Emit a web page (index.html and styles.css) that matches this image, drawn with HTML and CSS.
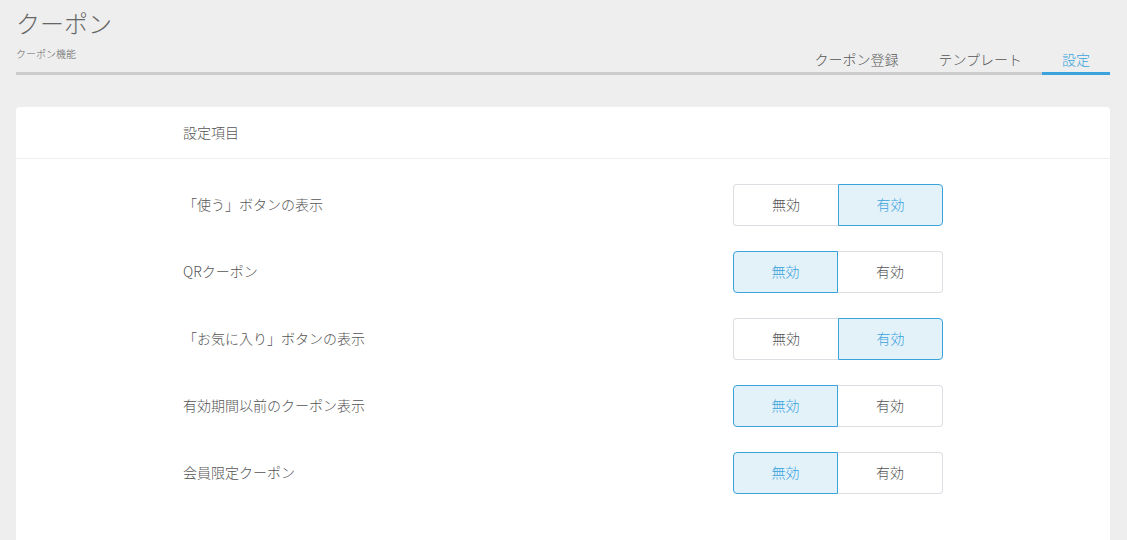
FILE: index.html
```html
<!DOCTYPE html>
<html lang="ja">
<head>
  <meta charset="UTF-8">
  <meta name="viewport" content="width=device-width, initial-scale=1.0">
  <title>クーポン</title>
  <link rel="stylesheet" href="styles.css">
</head>
<body>
  <div class="page">
    <div class="page-head">
      <div class="page-title">
        <h1>クーポン</h1>
        <p>クーポン機能</p>
      </div>
      <ul class="tabs">
        <li>クーポン登録</li>
        <li>テンプレート</li>
        <li class="active">設定</li>
      </ul>
    </div>

    <div class="card">
      <div class="card-head">設定項目</div>
      <div class="card-body">
        <div class="setting-row">
          <div class="setting-label">「使う」ボタンの表示</div>
          <div class="toggle">
            <span>無効</span>
            <span class="on">有効</span>
          </div>
        </div>
        <div class="setting-row">
          <div class="setting-label">QRクーポン</div>
          <div class="toggle">
            <span class="on">無効</span>
            <span>有効</span>
          </div>
        </div>
        <div class="setting-row">
          <div class="setting-label">「お気に入り」ボタンの表示</div>
          <div class="toggle">
            <span>無効</span>
            <span class="on">有効</span>
          </div>
        </div>
        <div class="setting-row">
          <div class="setting-label">有効期間以前のクーポン表示</div>
          <div class="toggle">
            <span class="on">無効</span>
            <span>有効</span>
          </div>
        </div>
        <div class="setting-row">
          <div class="setting-label">会員限定クーポン</div>
          <div class="toggle">
            <span class="on">無効</span>
            <span>有効</span>
          </div>
        </div>
      </div>
    </div>
  </div>
</body>
</html>
```

FILE: styles.css
```css
body {
  margin: 0;
  background: #eeeeee;
  font-family: "Noto Sans CJK JP", "Noto Sans", sans-serif;
  font-weight: 300;
  color: #555555;
}

.page {
  padding: 6px 17px 0 16px;
}

.page-head {
  display: flex;
  justify-content: space-between;
  align-items: flex-end;
  border-bottom: 3px solid #cccccc;
}

.page-title h1 {
  margin: 0;
  font-size: 24px;
  font-weight: 300;
  line-height: 34px;
  color: #666666;
}

.page-title p {
  margin: 7px 0 11px;
  font-size: 10px;
  line-height: 14px;
  color: #666666;
}

.tabs {
  display: flex;
  list-style: none;
  margin: 0 0 -3px;
  padding: 0;
}

.tabs li {
  padding: 0 20px 3px;
  font-size: 14px;
  line-height: 19px;
  color: #555555;
  border-bottom: 3px solid transparent;
}

.tabs li.active {
  color: #3aa3dc;
  border-bottom-color: #3aa3dc;
}

.card {
  margin-top: 32px;
  background: #ffffff;
  border-radius: 4px 4px 0 0;
  min-height: 433px;
}

.card-head {
  height: 51px;
  line-height: 50px;
  padding-left: 167px;
  font-size: 14px;
  border-bottom: 1px solid #eeeeee;
}

.card-body {
  display: flex;
  flex-direction: column;
  gap: 25px;
  padding: 25px 0 0 167px;
}

.setting-row {
  display: flex;
  align-items: center;
  height: 42px;
}

.setting-label {
  width: 550px;
  font-size: 14px;
  line-height: 18px;
  padding-bottom: 2px;
}

.toggle {
  display: flex;
}

.toggle span {
  box-sizing: border-box;
  width: 105px;
  height: 42px;
  line-height: 38px;
  text-align: center;
  font-size: 14px;
  color: #555555;
  background: #ffffff;
  border: 1px solid #dddde3;
}

.toggle span:first-child {
  border-radius: 4px 0 0 4px;
  border-right: none;
}

.toggle span:last-child {
  border-radius: 0 4px 4px 0;
  border-left: none;
}

.toggle span.on {
  color: #3aa3dc;
  background: #e3f1f9;
  border: 1px solid #3aa3dc;
}
```
